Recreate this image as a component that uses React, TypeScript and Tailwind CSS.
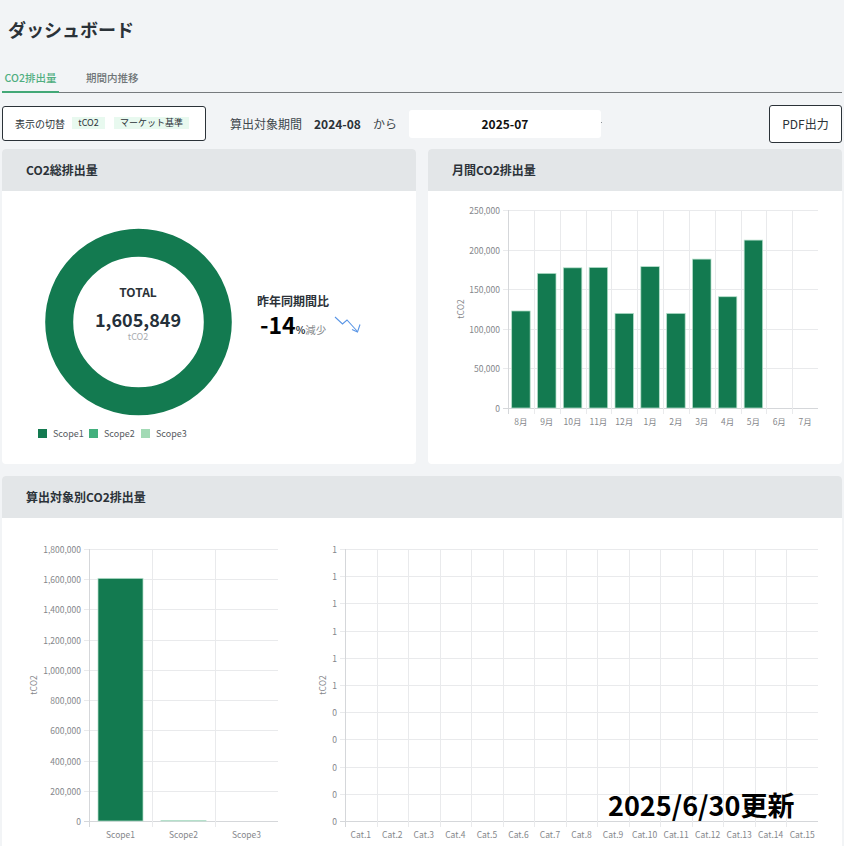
const FONT = '"Noto Sans CJK JP", "Noto Sans", sans-serif';

const BAR = "#137a50";
const BAR_EDGE = "#b5e0cb";
const GRID = "#e9eaec";
const AXIS = "#d5d7da";
const LABEL = "#85878b";

interface ChartProps {
  width: number;
  height: number;
  left: number;
  right: number;
  top: number;
  bottom: number;
  yLabels: string[];
  xLabels: string[];
  values: number[];
  max: number;
  barWidth: number;
  titleX: number;
  titleY: number;
}

const BarChart = ({
  width,
  height,
  left,
  right,
  top,
  bottom,
  yLabels,
  xLabels,
  values,
  max,
  barWidth,
  titleX,
  titleY,
}: ChartProps) => {
  const step = (right - left) / xLabels.length;
  const rowStep = (bottom - top) / (yLabels.length - 1);
  return (
    <svg width={width} height={height} className="block shrink-0" style={{ fontFamily: FONT }}>
      {yLabels.map((label, i) => {
        const y = Math.round(top + rowStep * i) + 0.5;
        return (
          <g key={i}>
            <line x1={left - 5} x2={right} y1={y} y2={y} stroke={i === yLabels.length - 1 ? AXIS : GRID} />
            <text x={left - 8} y={y + 3} textAnchor="end" fontSize="8.5" fill={LABEL}>
              {label}
            </text>
          </g>
        );
      })}
      {xLabels.map((label, i) => {
        const x = Math.round(left + step * i) + 0.5;
        return (
          <g key={label}>
            <line x1={x} x2={x} y1={top} y2={bottom + 6} stroke={i === 0 ? AXIS : GRID} />
            <text x={left + step * (i + 0.5)} y={bottom + 17} textAnchor="middle" fontSize="8.5" fill={LABEL}>
              {label}
            </text>
          </g>
        );
      })}
      {values.map((value, i) => {
        const h = ((bottom - top) * value) / max;
        if (h <= 0) return null;
        return (
          <rect
            key={i}
            x={left + step * (i + 0.5) - barWidth / 2}
            y={bottom - h}
            width={barWidth}
            height={h}
            fill={BAR}
            stroke={BAR_EDGE}
            strokeWidth="0.75"
          />
        );
      })}
      <text
        x={titleX}
        y={titleY}
        textAnchor="middle"
        fontSize="8.5"
        fill={LABEL}
        transform={`rotate(-90 ${titleX} ${titleY})`}
      >
        tCO2
      </text>
    </svg>
  );
};

const Card = ({ title, className, children }: { title: string; className: string; children: React.ReactNode }) => (
  <section className={`bg-white rounded-[4px] overflow-hidden ${className}`}>
    <h2 className="h-[42px] flex items-center pl-6 bg-[#e3e6e8] text-[12px] font-bold text-[#2b3238]">{title}</h2>
    {children}
  </section>
);

const months = ["8月", "9月", "10月", "11月", "12月", "1月", "2月", "3月", "4月", "5月", "6月", "7月"];
const monthly = [122500, 170000, 177000, 177500, 119500, 178500, 119500, 188000, 140500, 212000, 0, 0];
const cats = Array.from({ length: 15 }, (_, i) => `Cat.${i + 1}`);

const Legend = ({ color, label, className }: { color: string; label: string; className: string }) => (
  <div className={`flex items-center gap-[6px] ${className}`}>
    <span className={`w-[9px] h-[9px] ${color}`} />
    <span className="text-[9px] text-[#555a60]">{label}</span>
  </div>
);

export default function App() {
  return (
    <div
      className="relative w-[844px] h-[846px] overflow-hidden bg-[#f2f4f6] text-[#2b3238]"
      style={{ fontFamily: FONT }}
    >
      <h1 className="h-[58px] pl-2 flex items-center text-[18px] font-bold leading-none">ダッシュボード</h1>

      <nav className="mx-[2px] h-[35px] flex items-end border-b border-[#777b7e]">
        <div className="w-[57px] h-[35px] pt-[7px] flex items-center justify-center border-b-2 border-[#43a877] -mb-px text-[10.5px] text-[#4fae80] font-medium">
          CO2排出量
        </div>
        <div className="ml-[27px] h-[35px] pt-[7px] flex items-center text-[10.5px] text-[#6f7477] font-medium">期間内推移</div>
      </nav>

      <div className="mx-[2px] mt-3 h-[38px] flex items-center">
        <div className="w-[204px] h-[35px] -mt-[2px] flex items-center pl-3 bg-white border border-[#2b3238] rounded-[3px] text-[10px]">
          <span>表示の切替</span>
          <span className="ml-[7px] w-[33px] h-[12px] flex items-center justify-center bg-[#e8f9ef] text-[9px]">tCO2</span>
          <span className="ml-[9px] w-[75px] h-[12px] flex items-center justify-center bg-[#e8f9ef] text-[9px]">マーケット基準</span>
        </div>
        <span className="ml-6 text-[12px] text-[#40474c]">算出対象期間</span>
        <span className="ml-3 text-[12px] font-bold">2024-08</span>
        <span className="ml-3 text-[12px] text-[#40474c]">から</span>
        <div className="ml-3 w-[192px] h-[28px] flex items-center justify-center bg-white rounded-[3px] text-[12px] font-bold text-[#111]">
          2025-07
        </div>
        <span className="w-px h-px -mt-[3px] bg-[#8b9095]" />
        <button className="ml-auto w-[73px] h-[38px] flex items-center justify-center bg-white border border-[#2b3238] rounded-[3px] text-[12px] text-[#2b3238]">
          PDF出力
        </button>
      </div>

      <div className="mx-[2px] mt-[6px] flex gap-3">
        <Card title="CO2総排出量" className="w-[414px] h-[315px]">
          <div className="flex">
            <div className="w-[255px] pl-[36px] shrink-0">
              <div className="relative mt-[37px] w-[200px] h-[188px] flex justify-center">
                <svg width="188" height="188" className="block">
                  <circle cx="94.5" cy="94" r="79.3" fill="none" stroke={BAR} strokeWidth="28" />
                </svg>
                <div className="absolute inset-0 flex flex-col items-center">
                  <span className="mt-[56px] text-[12px] font-bold leading-[16px]">TOTAL</span>
                  <span className="mt-[7px] text-[18px] font-semibold leading-[24px] text-[#25303a]">1,605,849</span>
                  <span className="text-[9px] leading-[12px] text-[#a9acaf]">tCO2</span>
                </div>
              </div>
              <div className="mt-[11px] flex">
                <Legend color="bg-[#137a50]" label="Scope1" className="w-[51px]" />
                <Legend color="bg-[#43b07d]" label="Scope2" className="w-[52px]" />
                <Legend color="bg-[#a2dab5]" label="Scope3" className="w-[60px]" />
              </div>
            </div>
            <div className="mt-[101px]">
              <div className="text-[12px] font-bold leading-[18px]">昨年同期間比</div>
              <div className="flex items-start pl-[3px]">
                <div className="flex items-baseline h-[28px] leading-[28px]">
                  <span className="text-[23px] font-bold text-black">-14</span>
                  <span className="text-[10px] font-bold">%</span>
                  <span className="text-[10.5px] text-[#85888c]">減少</span>
                </div>
                <svg width="27" height="18" viewBox="0 0 27 18" className="ml-[8px] mt-[6px]" fill="none" stroke="#5a96e6" strokeWidth="1.1">
                  <path d="M1 1 L8.5 8 L13 4 L23 15" />
                  <path d="M18 13.5 L23.5 16 L26 8.5" />
                </svg>
              </div>
            </div>
          </div>
        </Card>

        <Card title="月間CO2排出量" className="w-[414px] h-[315px]">
          <BarChart
            width={414}
            height={273}
            left={80}
            right={390}
            top={19}
            bottom={217}
            yLabels={["250,000", "200,000", "150,000", "100,000", "50,000", "0"]}
            xLabels={months}
            values={monthly}
            max={250000}
            barWidth={18.5}
            titleX={36}
            titleY={118}
          />
        </Card>
      </div>

      <Card title="算出対象別CO2排出量" className="mx-[2px] mt-3 h-[400px]">
        <div className="flex">
          <BarChart
            width={290}
            height={328}
            left={87}
            right={276}
            top={31}
            bottom={303}
            yLabels={["1,800,000", "1,600,000", "1,400,000", "1,200,000", "1,000,000", "800,000", "600,000", "400,000", "200,000", "0"]}
            xLabels={["Scope1", "Scope2", "Scope3"]}
            values={[1605849, 2500, 0]}
            max={1800000}
            barWidth={45}
            titleX={35}
            titleY={167}
          />
          <BarChart
            width={550}
            height={328}
            left={53}
            right={526}
            top={31}
            bottom={303}
            yLabels={["1", "1", "1", "1", "1", "1", "0", "0", "0", "0", "0"]}
            xLabels={cats}
            values={[]}
            max={1}
            barWidth={0}
            titleX={34}
            titleY={167}
          />
        </div>
      </Card>

      <div className="absolute left-[608px] top-[786px] text-[27px] leading-[38px] font-bold text-black">2025/6/30更新</div>
    </div>
  );
}
